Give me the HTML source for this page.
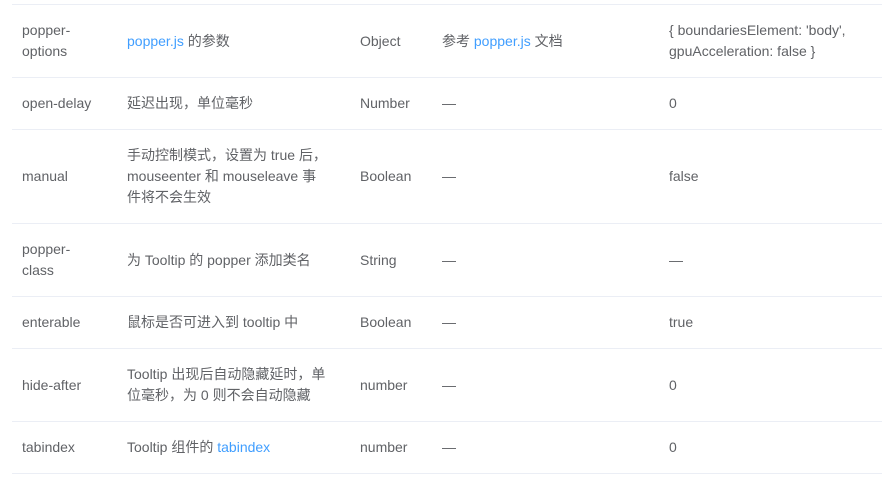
<!DOCTYPE html>
<html><head><meta charset="utf-8"><style>
body{margin:0;background:#fff;font-family:"Liberation Sans","Noto Sans CJK SC",sans-serif;font-size:14px;color:#606266}
table{position:absolute;left:12px;top:4px;border-collapse:collapse;width:870px;table-layout:fixed;border-top:1px solid #ebeef5}
td{padding:15px 10px;line-height:21px;border-bottom:1px solid #ebeef5;vertical-align:middle;white-space:nowrap}
a{color:#409eff;text-decoration:none}
</style></head><body>
<table>
<colgroup><col style="width:105px"><col style="width:233px"><col style="width:82px"><col style="width:227px"><col style="width:223px"></colgroup>
<tr><td>popper-<br>options</td><td><a>popper.js</a> 的参数</td><td>Object</td><td>参考 <a>popper.js</a> 文档</td><td>{ boundariesElement: 'body',<br>gpuAcceleration: false }</td></tr>
<tr><td>open-delay</td><td>延迟出现，单位毫秒</td><td>Number</td><td>—</td><td>0</td></tr>
<tr><td>manual</td><td>手动控制模式，设置为 true 后，<br>mouseenter 和 mouseleave 事<br>件将不会生效</td><td>Boolean</td><td>—</td><td>false</td></tr>
<tr><td>popper-<br>class</td><td>为 Tooltip 的 popper 添加类名</td><td>String</td><td>—</td><td>—</td></tr>
<tr><td>enterable</td><td>鼠标是否可进入到 tooltip 中</td><td>Boolean</td><td>—</td><td>true</td></tr>
<tr><td>hide-after</td><td>Tooltip 出现后自动隐藏延时，单<br>位毫秒，为 0 则不会自动隐藏</td><td>number</td><td>—</td><td>0</td></tr>
<tr><td>tabindex</td><td>Tooltip 组件的 <a>tabindex</a></td><td>number</td><td>—</td><td>0</td></tr>
</table>
</body></html>
